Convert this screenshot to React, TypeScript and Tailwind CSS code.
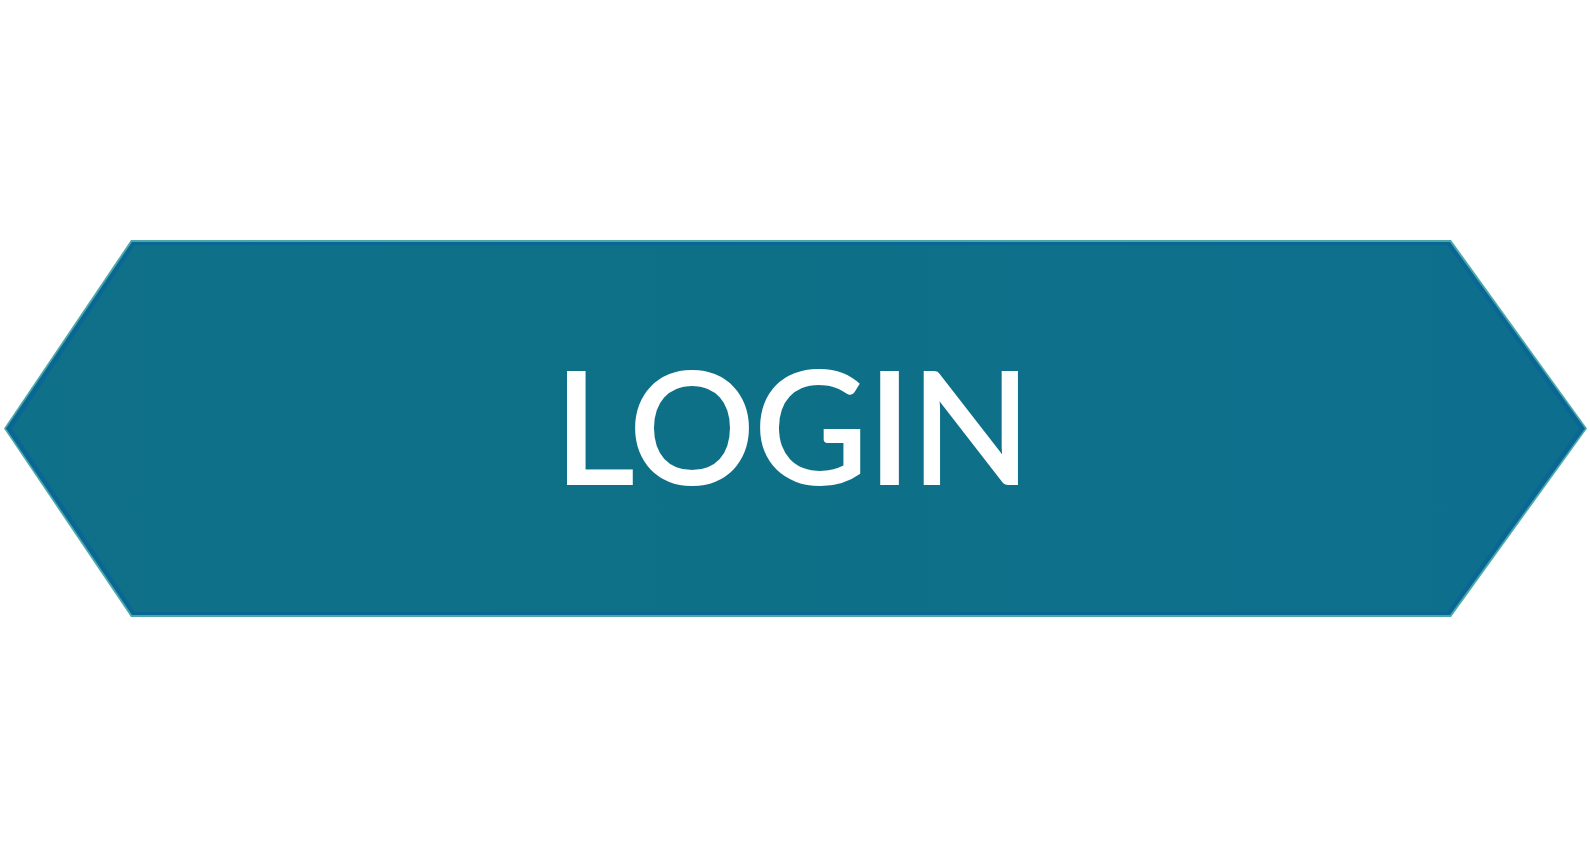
import { memo } from 'react';

// Hexagon shaped login button, clipped with a polygon
const LoginButton = memo(function LoginButton() {
  return (
    <div className="relative h-[377px] w-[1583px] bg-[#4aa8a8] [clip-path:polygon(127px_0,calc(100%-136px)_0,100%_50%,calc(100%-136px)_100%,127px_100%,0_50%)]">
      <div className="absolute inset-x-[2px] inset-y-[2px] bg-[#0a6793] [clip-path:polygon(126px_0,calc(100%-135px)_0,100%_50%,calc(100%-135px)_100%,126px_100%,0_50%)]">
        <button
          type="button"
          className="absolute inset-x-[6px] inset-y-[3px] flex items-center justify-center bg-gradient-to-r from-[#0f7089] via-[#0e7087] to-[#0d6f8e] [clip-path:polygon(123px_0,calc(100%-132px)_0,100%_50%,calc(100%-132px)_100%,123px_100%,0_50%)]"
        >
          <span className="pb-[9px] pr-[8px] font-['Lato','Noto_Sans',sans-serif] text-[158px] font-semibold leading-none tracking-[-2px] text-white">
            LOGIN
          </span>
        </button>
      </div>
    </div>
  );
});

export default function App() {
  return (
    <div className="h-[859px] w-[1590px] overflow-hidden bg-white pl-[4px] pt-[240px]">
      <LoginButton />
    </div>
  );
}
